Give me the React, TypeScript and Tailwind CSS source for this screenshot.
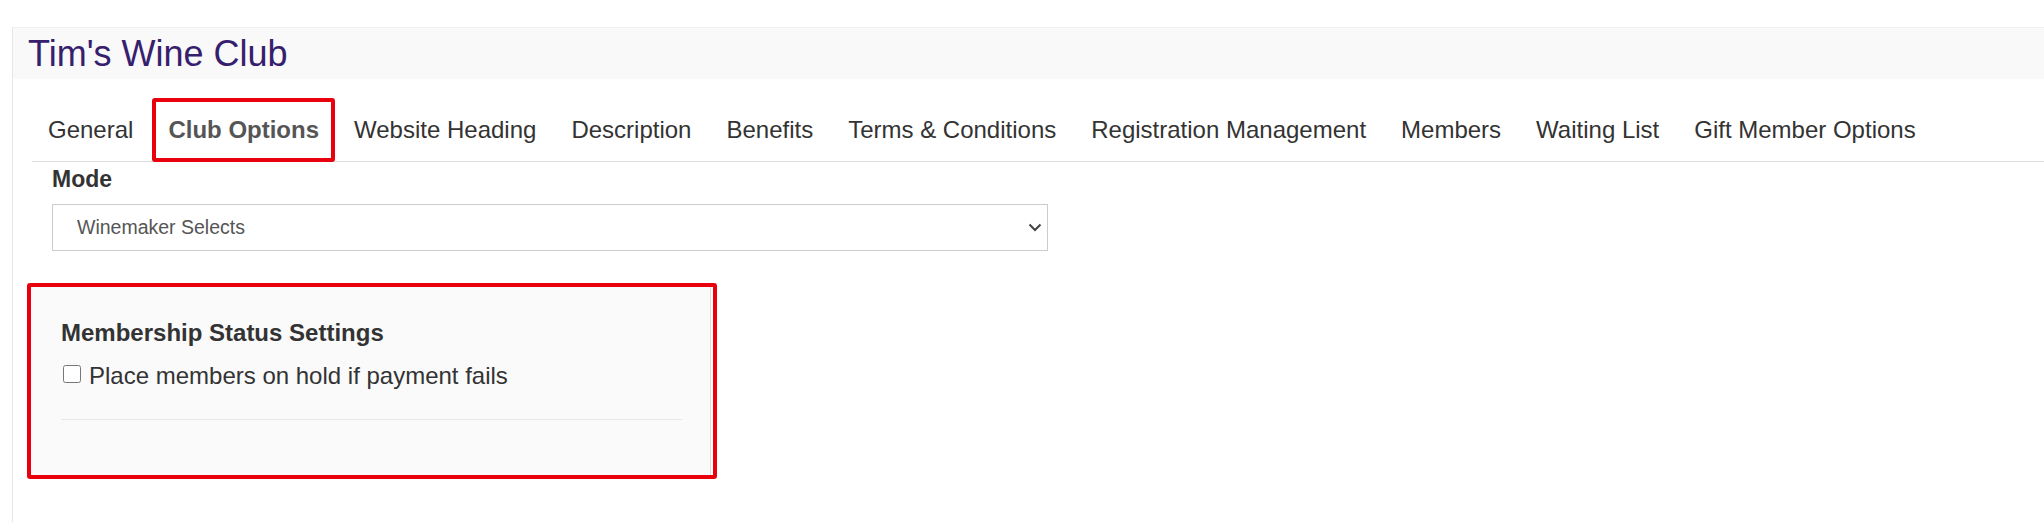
import React from "react";

const tabs = [
  "General",
  "Club Options",
  "Website Heading",
  "Description",
  "Benefits",
  "Terms & Conditions",
  "Registration Management",
  "Members",
  "Waiting List",
  "Gift Member Options",
];

export default function App() {
  return (
    <div
      className="w-[2044px] h-[522px] bg-white pt-[27px] pl-3 overflow-hidden text-[#333]"
      style={{ fontFamily: '"Liberation Sans", Arial, sans-serif' }}
    >
      <div className="h-full border-l border-[#e6e6e6]">
        {/* CLUB TITLE */}
        <div className="h-[52px] bg-[#f9f9f9] border-t border-[#f0f0f0] pl-[15px] flex items-center">
          <h1 className="text-[36px] leading-[52px] text-[#36206e]">Tim's Wine Club</h1>
        </div>

        {/* TABS */}
        <div className="ml-[19px] mt-[19px]">
          <ul className="flex border-b border-[#dddddd]">
            {tabs.map((t) => {
              const active = t === "Club Options";
              return (
                <li key={t} className="mr-[3px] -mb-px">
                  <span
                    className={
                      active
                        ? "block h-[64px] px-3 py-[11px] text-[24px] leading-[34px] font-bold text-[#555] border-4 border-[#e8000d] rounded-[3px] whitespace-nowrap"
                        : "block h-[64px] px-3 py-[11px] text-[24px] leading-[34px] border-4 border-transparent whitespace-nowrap"
                    }
                  >
                    {t}
                  </span>
                </li>
              );
            })}
          </ul>

          {/* MODE */}
          <div className="pl-5 pt-[3px]">
            <label className="block text-[23px] leading-[28px] font-bold text-[#333]">Mode</label>
            <div className="mt-[11px] w-[996px] h-[47px] border border-[#cccccc] bg-white flex items-center justify-between pl-6 pr-[5px]">
              <span className="text-[19.5px] text-[#555]">Winemaker Selects</span>
              <svg width="14" height="9" viewBox="0 0 14 9" fill="none">
                <path d="M1.5 1.5 L7 7 L12.5 1.5" stroke="#444" strokeWidth="2" />
              </svg>
            </div>
          </div>
        </div>

        {/* MEMBERSHIP STATUS PANEL */}
        <div className="ml-[14px] mt-8 w-[690px] h-[196px] border-4 border-[#e8000d] rounded-[3px] bg-white pr-[2px]">
          <div className="h-full w-[680px] bg-[#fafafa] border-r border-[#dddddd] pt-[31px] pl-[30px] pr-[28px]">
            <h3 className="text-[24px] leading-[29px] font-bold text-[#333]">Membership Status Settings</h3>
            <label className="mt-[14px] flex items-start text-[24px] leading-[29px] text-[#333]">
              <input type="checkbox" className="mt-[4px] ml-[2px] m-0 w-[18px] h-[18px]" />
              <span className="ml-[8px]">Place members on hold if payment fails</span>
            </label>
            <hr className="mt-[29px] border-0 border-t border-[#e8e8e8]" />
          </div>
        </div>
      </div>
    </div>
  );
}
